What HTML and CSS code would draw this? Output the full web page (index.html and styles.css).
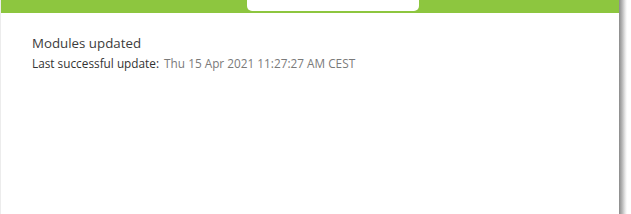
FILE: index.html
```html
<!DOCTYPE html>
<html lang="en">
<head>
    <meta charset="UTF-8">
    <meta name="viewport" content="width=device-width, initial-scale=1.0">
    <title>Modules</title>
    <link rel="stylesheet" href="styles.css">
</head>
<body>
    <div class="window">
        <div class="panel">
            <div class="panel-header">
                <div class="header-tab"></div>
            </div>
            <div class="panel-body">
                <h1>Modules updated</h1>
                <p class="update-info">
                    <span class="update-label">Last successful update:</span>
                    <span class="update-date">Thu 15 Apr 2021 11:27:27 AM CEST</span>
                </p>
            </div>
        </div>
        <div class="panel-shadow"></div>
    </div>
</body>
</html>
```

FILE: styles.css
```css
* {
    margin: 0;
    padding: 0;
    box-sizing: border-box;
}

:root {
    --green: #8dc63f;
    --white: #fff;
    --text: #3c3c3c;
    --muted: #7a7a7a;
}

body {
    width: 631px;
    height: 214px;
    overflow: hidden;
    background: var(--white);
    font-family: 'Open Sans', sans-serif;
}

.window {
    display: flex;
    height: 100%;
}

.panel {
    width: 619px;
    display: flex;
    flex-direction: column;
    border-left: 1px solid #ececec;
}

.panel-header {
    height: 13px;
    background: var(--green);
    display: flex;
    justify-content: center;
    padding-left: 45px;
}

.header-tab {
    width: 172px;
    height: 11px;
    background: var(--white);
    border-radius: 0 0 5px 5px;
}

.panel-body {
    padding: 22px 31px;
}

.panel-body h1 {
    font-size: 13.3px;
    font-weight: 400;
    color: var(--text);
    line-height: 17px;
}

.update-info {
    margin-top: 3px;
    font-size: 11.8px;
    line-height: 16px;
}

.update-label {
    color: #333;
    margin-right: 2px;
}

.update-date {
    color: var(--muted);
}

.panel-shadow {
    width: 8px;
    background: linear-gradient(to right, #8a8a8a, #b8b8b8 40%, #e6e6e6 75%, #fff);
}
```
